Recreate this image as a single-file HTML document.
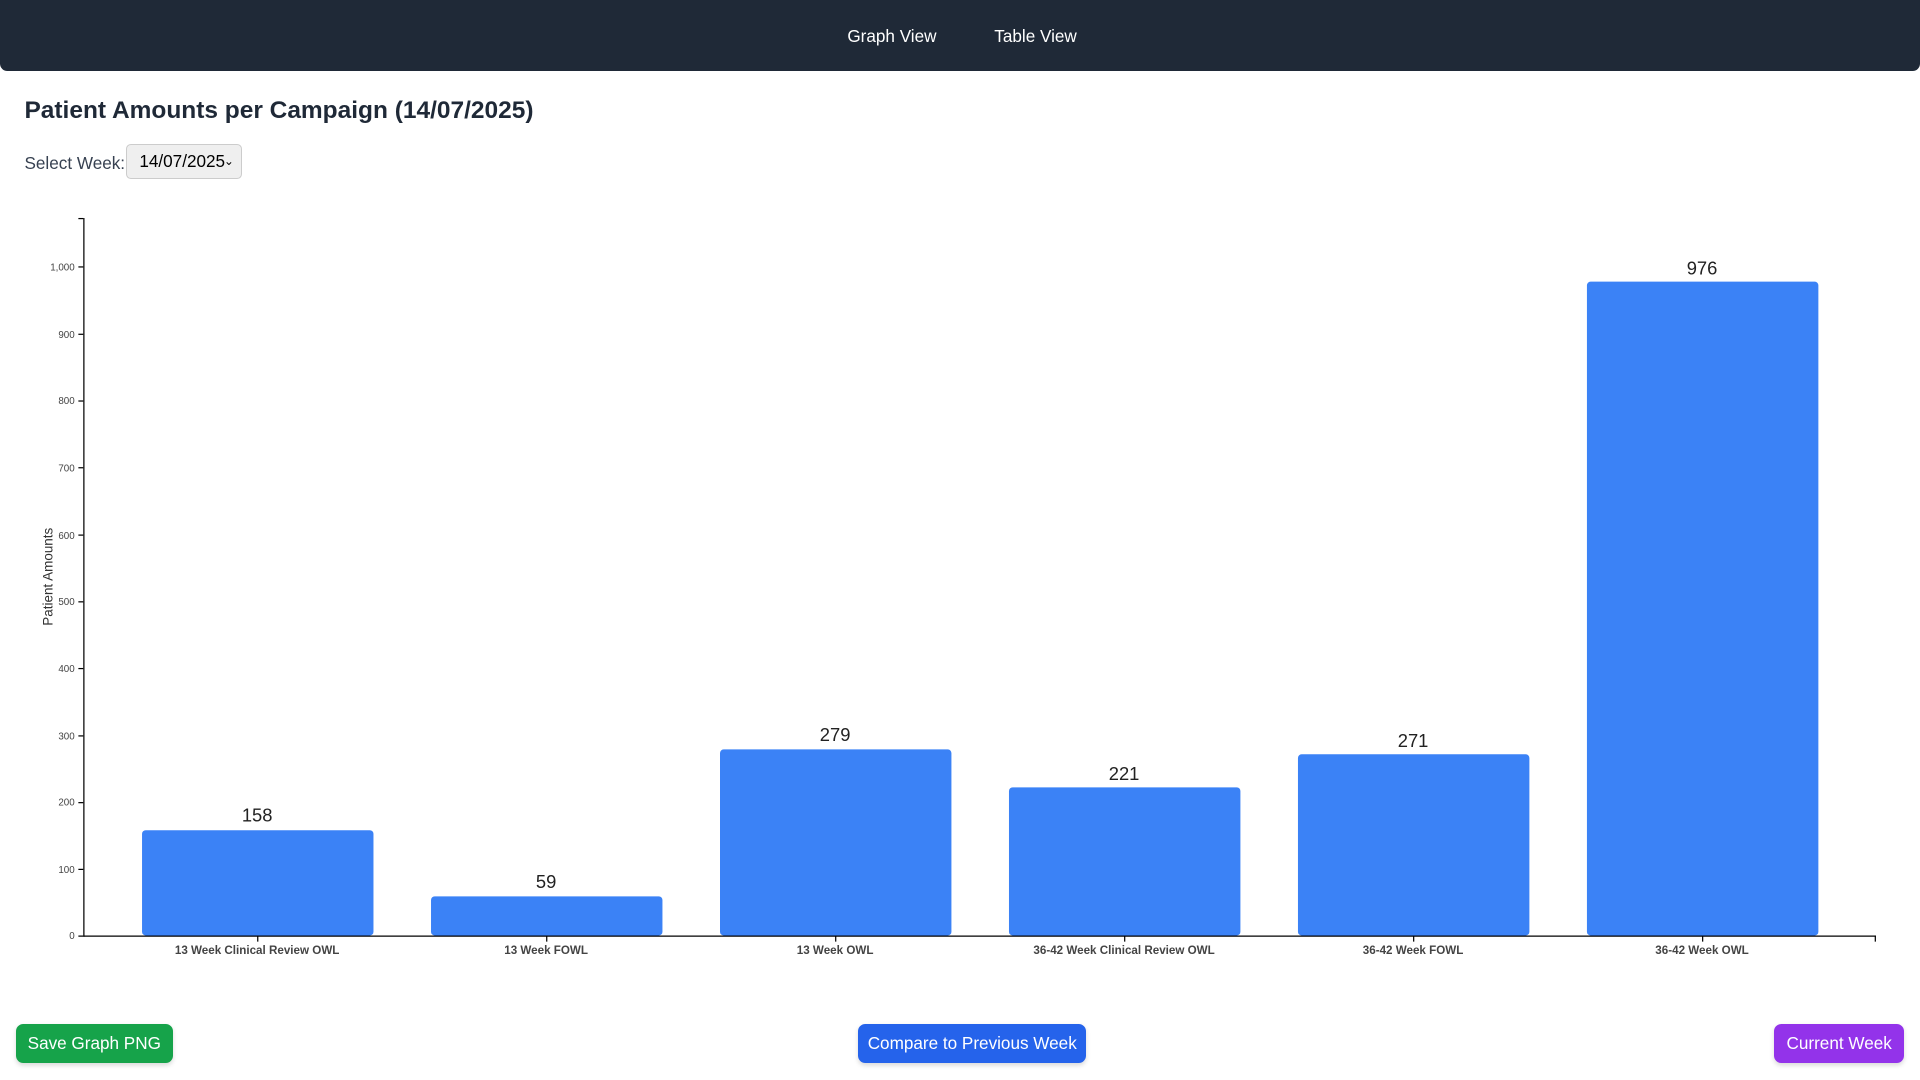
<!DOCTYPE html>
<html><head><meta charset="utf-8"><style>
html,body{margin:0;padding:0;background:#fff;overflow:hidden}
#w{width:1568px;height:882px;position:relative;zoom:1.22449;font-family:"Liberation Sans",sans-serif}
.nav{position:absolute;left:0;top:0;width:1568px;height:58px;background:#1f2937;border-radius:0 0 6px 6px}
.nav a{position:absolute;top:21px;color:#fff;font-size:14px;text-decoration:none}
h1{position:absolute;left:20px;top:79px;margin:0;font-size:20px;font-weight:bold;color:#1f2937}
.lbl{position:absolute;left:20px;top:125px;font-size:14px;color:#374151}
.sel{position:absolute;left:103px;top:118px;width:95px;height:28px;border:1px solid #ccc;border-radius:4px;background:#efefef;font-size:14px;box-sizing:border-box;line-height:27px;padding-left:10px}
.btn{position:absolute;top:836px;height:32px;line-height:32px;color:#fff;font-size:14px;text-align:center;border-radius:6px;box-shadow:0 2px 4px rgba(0,0,0,.15)}
svg{position:absolute;left:0;top:0}
</style></head><body><div id="w">
<div class="nav"><a style="left:692px">Graph View</a><a style="left:812px">Table View</a></div>
<h1>Patient Amounts per Campaign (14/07/2025)</h1>
<div class="lbl">Select Week:</div>
<div class="sel">14/07/2025 <span style="position:absolute;right:6px;font-size:10px">&#8964;</span></div>
<svg width="1568" height="882" font-family="Liberation Sans, sans-serif">
<g stroke="#000" stroke-width="1">
<line x1="68.5" y1="178" x2="68.5" y2="765"/><line x1="64" y1="178.5" x2="68" y2="178.5"/>
<line x1="68" y1="764.5" x2="1532" y2="764.5"/><line x1="1531.5" y1="764" x2="1531.5" y2="769"/>
<line x1="64" y1="764.5" x2="68" y2="764.5"/><line x1="64" y1="710" x2="68" y2="710"/><line x1="64" y1="655.5" x2="68" y2="655.5"/><line x1="64" y1="601" x2="68" y2="601"/><line x1="64" y1="546" x2="68" y2="546"/><line x1="64" y1="491.5" x2="68" y2="491.5"/><line x1="64" y1="437" x2="68" y2="437"/><line x1="64" y1="382" x2="68" y2="382"/><line x1="64" y1="327.5" x2="68" y2="327.5"/><line x1="64" y1="273" x2="68" y2="273"/><line x1="64" y1="218" x2="68" y2="218"/>
<line x1="210.5" y1="764" x2="210.5" y2="769"/><line x1="446.5" y1="764" x2="446.5" y2="769"/><line x1="682.5" y1="764" x2="682.5" y2="769"/><line x1="918.5" y1="764" x2="918.5" y2="769"/><line x1="1154.5" y1="764" x2="1154.5" y2="769"/><line x1="1390.5" y1="764" x2="1390.5" y2="769"/>
</g>
<g font-size="8" fill="#444" text-anchor="end">
<text x="61" y="767">0</text><text x="61" y="713">100</text><text x="61" y="658">200</text><text x="61" y="604">300</text><text x="61" y="549">400</text><text x="61" y="494">500</text><text x="61" y="440">600</text><text x="61" y="385">700</text><text x="61" y="330">800</text><text x="61" y="276">900</text><text x="61" y="221">1,000</text>
</g>
<text transform="translate(43,471) rotate(-90)" font-size="11" fill="#333" text-anchor="middle">Patient Amounts</text>
<g fill="#3b82f6">
<rect x="116" y="678" width="189" height="86" rx="3"/>
<rect x="352" y="732" width="189" height="32" rx="3"/>
<rect x="588" y="612" width="189" height="152" rx="3"/>
<rect x="824" y="643" width="189" height="121" rx="3"/>
<rect x="1060" y="616" width="189" height="148" rx="3"/>
<rect x="1296" y="230" width="189" height="534" rx="3"/>
</g>
<g font-size="15" fill="#222" text-anchor="middle">
<text x="210" y="671">158</text><text x="446" y="725">59</text><text x="682" y="605">279</text><text x="918" y="637">221</text><text x="1154" y="610">271</text><text x="1390" y="224">976</text>
</g>
<g font-size="9.5" font-weight="bold" fill="#444" text-anchor="middle">
<text x="210" y="779">13 Week Clinical Review OWL</text><text x="446" y="779">13 Week FOWL</text><text x="682" y="779">13 Week OWL</text><text x="918" y="779">36-42 Week Clinical Review OWL</text><text x="1154" y="779">36-42 Week FOWL</text><text x="1390" y="779">36-42 Week OWL</text>
</g>
</svg>
<div class="btn" style="left:13px;width:128px;background:#16a34a">Save Graph PNG</div>
<div class="btn" style="left:701px;width:186px;background:#2563eb">Compare to Previous Week</div>
<div class="btn" style="left:1449px;width:106px;background:#9333ea">Current Week</div>
</div></body></html>
